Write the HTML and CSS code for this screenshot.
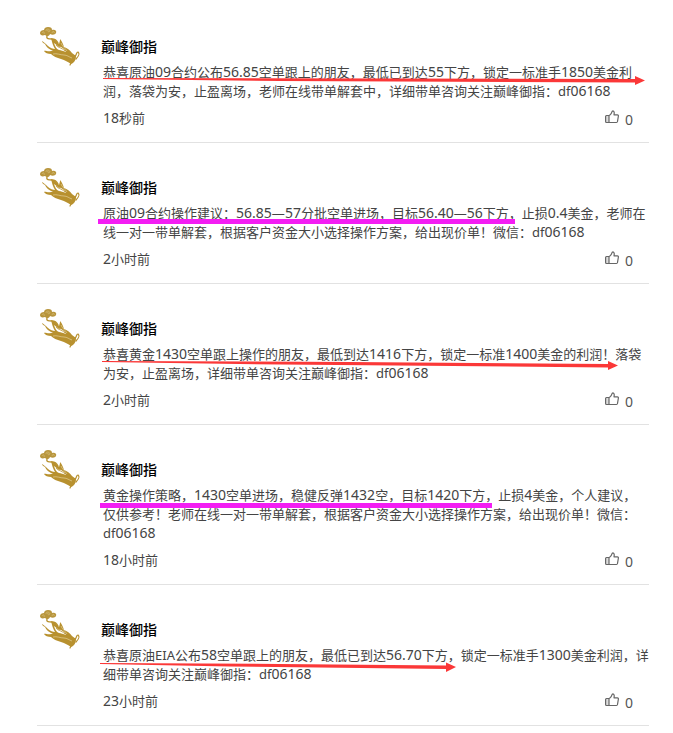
FILE: index.html
```html
<!DOCTYPE html>
<html lang="zh-CN">
<head>
  <meta charset="UTF-8" />
  <meta name="viewport" content="width=device-width, initial-scale=1.0" />
  <title>巅峰御指</title>
  <link rel="stylesheet" href="styles.css">
</head>
<body>
  <!-- shared icons -->
  <svg class="defs" width="0" height="0" aria-hidden="true">
    <symbol id="hand" viewBox="0 0 40 40">
      <path fill="#b8953c" d="M0 7C0 5 2 4 4 4C4 2 6 1 8 1C11 1 12 2 12 4C15 3 17 5 16 7C15 9 12 9 10 8C9 11 6 10 5 9C2 10 0 9 0 7Z"/>
      <path fill="none" stroke="#e0cc90" stroke-width=".5" d="M2 7C3 5 5 6 4 8M6 5C6 2 10 3 10 5C9 6 7 6 8 4M12 7C12 5 15 5 14 7"/>
      <path fill="none" stroke="#b8912f" stroke-width="1.300" stroke-linecap="round" d="M7 10C6 13 9 13 12 13C15 13 17 15 18 17"/>
      <path fill="#b8912f" d="M11 12C14 13 17 15 19 18C20 15 20 14 20 13C22 15 23 18 24 21C27 22 30 24 32 27L36 30C36 34 34 37 31 38C28 36 25 34 21 33C17 32 13 30 11 28C8 28 5 27 4 25C5 24 8 26 11 25L13 25C9 23 6 21 5 18C3 17 2 16 2 15C4 16 6 18 8 20C10 22 13 23 15 23C13 20 12 16 11 12Z"/>
      <path fill="#fff" d="M14 17C16 18 17 20 19 21C21 20 22 22 24 23L26 26C23 25 21 24 19 24C16 23 15 20 14 17Z"/>
      <path fill="none" stroke="#b8912f" stroke-width=".8" d="M16 19C18 22 21 21 25 25"/>
      <path fill="none" stroke="#e9d9a8" stroke-width=".6" d="M13 28C17 27 20 29 24 29C27 29 29 31 32 32M21 17C22 20 25 22 27 25"/>
      <path fill="none" stroke="#b8912f" stroke-width="1.200" stroke-linecap="round" d="M35 30C37 29 36 26 38 26C40 28 39 30 36 33M31 37L30 39"/>
    </symbol>
    <symbol id="thumb" viewBox="0 0 14 14">
      <path fill="#ddd" d="M1 6H4V13H1Z"/>
      <path fill="none" stroke="#666" stroke-width="1.200" stroke-linejoin="round" d="M4 5.500H1.500C1 5.500 .6 6 .6 6.500V11.500C.6 12 1 12.500 1.500 12.500H11.500C12 12.500 12.400 12 12.500 11.500L13.400 6C13.400 5.300 13 4.800 12.500 4.800H9C9.300 3.500 9.500 1 8 .8C6.700 .7 7 2.500 6.200 3.500C5.500 4.500 5 5.500 4 5.500V12.500"/>
    </symbol>
  </svg>

  <main class="feed">
    <article class="post">
      <svg class="avatar"><use href="#hand"/></svg>
      <div class="body">
        <h2 class="name">巅峰御指</h2>
        <div class="message">
          <p>恭喜原油<span class="num">09</span>合约公布<span class="num">56.85</span>空单跟上的朋友，最低已到达<span class="num">55</span>下方，锁定一标准手<span class="num">1850</span>美金利润，落袋为安，止盈离场，老师在线带单解套中，详细带单咨询关注巅峰御指：df<span class="num">06168</span></p>
          <svg class="arrow" width="545" height="12" viewBox="0 0 545 12"><path d="M3 4L300 4.500L535 5V2L545 6.500L535 11V8.500L180 7L3 5Z"/></svg>
        </div>
        <div class="meta">
          <time><span class="num">18</span>秒前</time>
          <button class="like" type="button" aria-label="赞 0"><svg><use href="#thumb"/></svg><span>0</span></button>
        </div>
      </div>
    </article>

    <article class="post">
      <svg class="avatar"><use href="#hand"/></svg>
      <div class="body">
        <h2 class="name">巅峰御指</h2>
        <div class="message">
          <p>原油<span class="num">09</span>合约操作建议：<span class="num">56.85</span>—<span class="num">57</span>分批空单进场，目标<span class="num">56.40</span>—<span class="num">56</span>下方，止损<span class="num">0.4</span>美金，老师在线一对一带单解套，根据客户资金大小选择操作方案，给出现价单！微信：df<span class="num">06168</span></p>
          <svg class="marker" width="417" height="7"><rect width="417" height="5"/></svg>
        </div>
        <div class="meta">
          <time><span class="num">2</span>小时前</time>
          <button class="like" type="button" aria-label="赞 0"><svg><use href="#thumb"/></svg><span>0</span></button>
        </div>
      </div>
    </article>

    <article class="post">
      <svg class="avatar"><use href="#hand"/></svg>
      <div class="body">
        <h2 class="name">巅峰御指</h2>
        <div class="message">
          <p>恭喜黄金<span class="num">1430</span>空单跟上操作的朋友，最低到达<span class="num">1416</span>下方，锁定一标准<span class="num">1400</span>美金的利润！落袋为安，止盈离场，详细带单咨询关注巅峰御指：df<span class="num">06168</span></p>
          <svg class="arrow" width="518" height="14" viewBox="0 0 518 14"><path d="M2 5L250 6L508 8V5L518 9.500L508 14V11.500L180 8.500L2 6Z"/></svg>
        </div>
        <div class="meta">
          <time><span class="num">2</span>小时前</time>
          <button class="like" type="button" aria-label="赞 0"><svg><use href="#thumb"/></svg><span>0</span></button>
        </div>
      </div>
    </article>

    <article class="post">
      <svg class="avatar"><use href="#hand"/></svg>
      <div class="body">
        <h2 class="name">巅峰御指</h2>
        <div class="message">
          <p>黄金操作策略，<span class="num">1430</span>空单进场，稳健反弹<span class="num">1432</span>空，目标<span class="num">1420</span>下方，止损<span class="num">4</span>美金，个人建议，仅供参考！老师在线一对一带单解套，根据客户资金大小选择操作方案，给出现价单！微信：df<span class="num">06168</span></p>
          <svg class="marker" width="394" height="7"><rect x="2" y="2" width="392" height="5"/></svg>
        </div>
        <div class="meta">
          <time><span class="num">18</span>小时前</time>
          <button class="like" type="button" aria-label="赞 0"><svg><use href="#thumb"/></svg><span>0</span></button>
        </div>
      </div>
    </article>

    <article class="post">
      <svg class="avatar"><use href="#hand"/></svg>
      <div class="body">
        <h2 class="name">巅峰御指</h2>
        <div class="message">
          <p>恭喜原油EIA公布<span class="num">58</span>空单跟上的朋友，最低已到达<span class="num">56.70</span>下方，锁定一标准手<span class="num">1300</span>美金利润，详细带单咨询关注巅峰御指：df<span class="num">06168</span></p>
          <svg class="arrow" width="356" height="16" viewBox="0 0 356 16"><path d="M0 6L180 7L346 8.500V5.500L356 10L346 15V12L130 9.500L0 7Z"/></svg>
        </div>
        <div class="meta">
          <time><span class="num">23</span>小时前</time>
          <button class="like" type="button" aria-label="赞 0"><svg><use href="#thumb"/></svg><span>0</span></button>
        </div>
      </div>
    </article>
  </main>
</body>
</html>
```
FILE: styles.css
```css
body {
  margin: 0;
  background: #fff;
  color: #444;
  font-family: "Noto Sans", "Noto Sans CJK SC", sans-serif;
  font-size: 13px;
  line-height: 19px;
}
.defs {
  position: absolute;
}
.feed {
  padding: 2px 24px 0 37px;
}
.post {
  display: flex;
  gap: 21px;
  padding: 24px 0 13px 3px;
  border-bottom: 1px solid #e2e2e2;
}
.avatar {
  flex: none;
  width: 40px;
  height: 40px;
}
.body {
  flex: 1;
  min-width: 0;
  padding-top: 10px;
}
.name {
  margin: 0 0 7px;
  color: #000;
  font-family: "Noto Sans CJK SC", sans-serif;
  font-size: 14px;
  font-weight: 500;
  line-height: 20px;
}
.num {
  font-size: 14px;
  line-height: 1;
}
.message {
  position: relative;
  padding-left: 2px;
}
.message p {
  margin: 0;
}
/* hand-drawn marks lie over the first line */
.arrow,
.marker {
  position: absolute;
  left: -1px;
}
.arrow {
  top: 11px;
  fill: #fb3838;
}
.marker {
  top: 15px;
  left: -3px;
  fill: #f31df3;
}
.meta {
  display: flex;
  justify-content: space-between;
  height: 20px;
  margin-top: 8px;
  padding: 0 16px 0 2px;
}
.like {
  display: flex;
  gap: 6px;
  padding: 1px 0 0;
  border: 0;
  background: none;
  color: #555;
  font: inherit;
  font-size: 14px;
  line-height: 20px;
  cursor: pointer;
}
.like svg {
  width: 14px;
  height: 14px;
}
```
